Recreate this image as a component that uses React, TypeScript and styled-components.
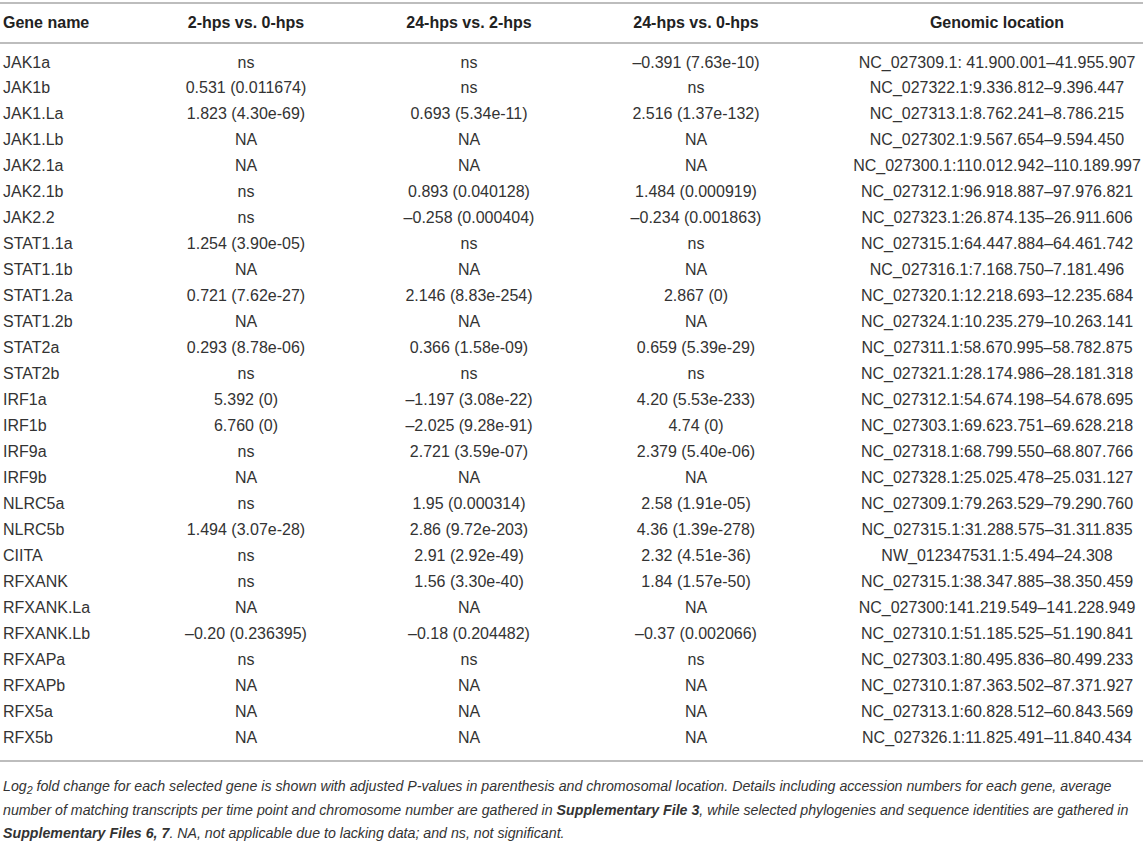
import React from "react";
import styled, { createGlobalStyle } from "styled-components";

const Global = createGlobalStyle`
  html, body { margin: 0; padding: 0; background: #ffffff; }
  body { font-family: "Liberation Sans", Arial, Helvetica, sans-serif; color: #2e2e2e; }
`;

const Page = styled.div`
  width: 1143px;
  padding-top: 2px;
`;

const Table = styled.table`
  width: 1143px;
  border-collapse: collapse;
  table-layout: fixed;
  font-size: 16px;
  border-top: 2px solid #bdbdbd;
  border-bottom: 2px solid #bdbdbd;
`;

const HeadRow = styled.tr`
  height: 40px;
  border-bottom: 2px solid #bdbdbd;
`;

const Th = styled.th<{ $left?: boolean; $pad?: number }>`
  font-weight: bold;
  text-align: ${(p) => (p.$left ? "left" : "center")};
  padding: 0 0 0 ${(p) => (p.$left ? 3 : p.$pad ?? 0)}px;
  white-space: nowrap;
  color: #222;
`;

const Row = styled.tr<{ $first?: boolean; $last?: boolean }>`
  height: ${(p) => 26 + (p.$first ? 6 : 0) + (p.$last ? 10 : 0)}px;
`;

const Td = styled.td<{ $left?: boolean; $pad?: number; $first?: boolean; $last?: boolean }>`
  text-align: ${(p) => (p.$left ? "left" : "center")};
  padding: ${(p) => (p.$first ? 6 : 0)}px 0 ${(p) => (p.$last ? 10 : 0)}px
    ${(p) => (p.$left ? 3 : p.$pad ?? 0)}px;
  white-space: nowrap;
  color: #333;
`;

const Caption = styled.p`
  margin: 13px 0 0 0;
  padding: 0 0 0 3px;
  font-size: 14.2px;
  line-height: 23.5px;
  font-style: italic;
  color: #333;
  white-space: nowrap;
`;

const Sub = styled.sub`
  font-size: 0.75em;
  line-height: 0;
  vertical-align: baseline;
  position: relative;
  top: 0.3em;
`;

const Strong = styled.b`
  font-weight: bold;
  font-style: italic;
`;

const rows: string[][] = [
  ["JAK1a", "ns", "ns", "–0.391 (7.63e-10)", "NC_027309.1: 41.900.001–41.955.907"],
  ["JAK1b", "0.531 (0.011674)", "ns", "ns", "NC_027322.1:9.336.812–9.396.447"],
  ["JAK1.La", "1.823 (4.30e-69)", "0.693 (5.34e-11)", "2.516 (1.37e-132)", "NC_027313.1:8.762.241–8.786.215"],
  ["JAK1.Lb", "NA", "NA", "NA", "NC_027302.1:9.567.654–9.594.450"],
  ["JAK2.1a", "NA", "NA", "NA", "NC_027300.1:110.012.942–110.189.997"],
  ["JAK2.1b", "ns", "0.893 (0.040128)", "1.484 (0.000919)", "NC_027312.1:96.918.887–97.976.821"],
  ["JAK2.2", "ns", "–0.258 (0.000404)", "–0.234 (0.001863)", "NC_027323.1:26.874.135–26.911.606"],
  ["STAT1.1a", "1.254 (3.90e-05)", "ns", "ns", "NC_027315.1:64.447.884–64.461.742"],
  ["STAT1.1b", "NA", "NA", "NA", "NC_027316.1:7.168.750–7.181.496"],
  ["STAT1.2a", "0.721 (7.62e-27)", "2.146 (8.83e-254)", "2.867 (0)", "NC_027320.1:12.218.693–12.235.684"],
  ["STAT1.2b", "NA", "NA", "NA", "NC_027324.1:10.235.279–10.263.141"],
  ["STAT2a", "0.293 (8.78e-06)", "0.366 (1.58e-09)", "0.659 (5.39e-29)", "NC_027311.1:58.670.995–58.782.875"],
  ["STAT2b", "ns", "ns", "ns", "NC_027321.1:28.174.986–28.181.318"],
  ["IRF1a", "5.392 (0)", "–1.197 (3.08e-22)", "4.20 (5.53e-233)", "NC_027312.1:54.674.198–54.678.695"],
  ["IRF1b", "6.760 (0)", "–2.025 (9.28e-91)", "4.74 (0)", "NC_027303.1:69.623.751–69.628.218"],
  ["IRF9a", "ns", "2.721 (3.59e-07)", "2.379 (5.40e-06)", "NC_027318.1:68.799.550–68.807.766"],
  ["IRF9b", "NA", "NA", "NA", "NC_027328.1:25.025.478–25.031.127"],
  ["NLRC5a", "ns", "1.95 (0.000314)", "2.58 (1.91e-05)", "NC_027309.1:79.263.529–79.290.760"],
  ["NLRC5b", "1.494 (3.07e-28)", "2.86 (9.72e-203)", "4.36 (1.39e-278)", "NC_027315.1:31.288.575–31.311.835"],
  ["CIITA", "ns", "2.91 (2.92e-49)", "2.32 (4.51e-36)", "NW_012347531.1:5.494–24.308"],
  ["RFXANK", "ns", "1.56 (3.30e-40)", "1.84 (1.57e-50)", "NC_027315.1:38.347.885–38.350.459"],
  ["RFXANK.La", "NA", "NA", "NA", "NC_027300:141.219.549–141.228.949"],
  ["RFXANK.Lb", "–0.20 (0.236395)", "–0.18 (0.204482)", "–0.37 (0.002066)", "NC_027310.1:51.185.525–51.190.841"],
  ["RFXAPa", "ns", "ns", "ns", "NC_027303.1:80.495.836–80.499.233"],
  ["RFXAPb", "NA", "NA", "NA", "NC_027310.1:87.363.502–87.371.927"],
  ["RFX5a", "NA", "NA", "NA", "NC_027313.1:60.828.512–60.843.569"],
  ["RFX5b", "NA", "NA", "NA", "NC_027326.1:11.825.491–11.840.434"],
];

const headers = ["Gene name", "2-hps vs. 0-hps", "24-hps vs. 2-hps", "24-hps vs. 0-hps", "Genomic location"];
const widths = [135, 222, 224, 230, 332];

export default function App() {
  return (
    <Page>
      <Global />
      <Table>
        <colgroup>
          {widths.map((w, i) => (
            <col key={i} style={{ width: w }} />
          ))}
        </colgroup>
        <thead>
          <HeadRow>
            {headers.map((h, i) => (
              <Th key={h} $left={i === 0} $pad={i === 4 ? 40 : 0}>
                {h}
              </Th>
            ))}
          </HeadRow>
        </thead>
        <tbody>
          {rows.map((r, ri) => {
            const first = ri === 0;
            const last = ri === rows.length - 1;
            return (
              <Row key={r[0]} $first={first} $last={last}>
                {r.map((c, i) => (
                  <Td key={i} $left={i === 0} $pad={i === 4 ? 40 : 0} $first={first} $last={last}>
                    {c}
                  </Td>
                ))}
              </Row>
            );
          })}
        </tbody>
      </Table>
      <Caption>
        Log<Sub>2</Sub> fold change for each selected gene is shown with adjusted P-values in parenthesis and chromosomal
        location. Details including accession numbers for each gene, average
        <br />
        number of matching transcripts per time point and chromosome number are gathered in{" "}
        <Strong>Supplementary File 3</Strong>, while selected phylogenies and sequence identities are gathered in
        <br />
        <Strong>Supplementary Files 6, 7</Strong>. NA, not applicable due to lacking data; and ns, not significant.
      </Caption>
    </Page>
  );
}
